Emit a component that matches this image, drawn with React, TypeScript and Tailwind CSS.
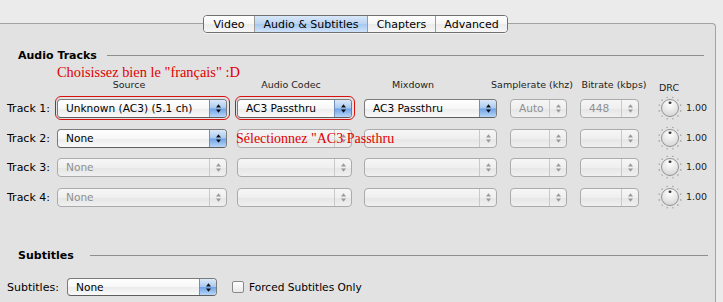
import React from "react";

type PState = "active" | "disabled";

function Arrows({ color }: { color: string }) {
  return (
    <svg width="7" height="11" viewBox="0 0 7 11">
      <path d="M3.5 1.2 L6 4.4 H1 Z" fill={color} />
      <path d="M3.5 9.8 L6 6.6 H1 Z" fill={color} />
    </svg>
  );
}

function Popup({
  w,
  text,
  state,
  textDim,
  h = "h-[19px]",
}: {
  w: string;
  text?: string;
  state: PState;
  textDim?: boolean;
  h?: string;
}) {
  const active = state === "active";
  return (
    <div
      className={`flex ${w} ${h} items-stretch overflow-hidden rounded-[4px] border ${
        active
          ? "border-[#7a7a7a] border-b-[#5e5e5e] bg-[linear-gradient(to_bottom,#ffffff_0%,#f7f7f7_50%,#ececec_52%,#f9f9f9_100%)]"
          : "border-[#ababab] bg-[linear-gradient(to_bottom,#f6f6f6_0%,#efefef_50%,#e6e6e6_52%,#f0f0f0_100%)]"
      }`}
    >
      <span
        className={`flex flex-1 items-center pl-[8px] text-[10.6px] leading-none ${
          textDim || !active ? "text-[#8f8f8f]" : "text-black"
        }`}
      >
        {text}
      </span>
      <div
        className={`flex w-[17px] items-center justify-center ${
          active
            ? "border-l border-[#6f8fb9] bg-[linear-gradient(to_bottom,#dce9f9_0%,#a9c9f0_48%,#6ea3e8_52%,#b9d6f7_100%)]"
            : "border-l border-[#c9c9c9]"
        }`}
      >
        <Arrows color={active ? "#111" : "#9a9a9a"} />
      </div>
    </div>
  );
}

function Knob() {
  const dots = Array.from({ length: 12 }, (_, i) => {
    const a = (i / 12) * Math.PI * 2 + 0.26;
    return { x: 12 + Math.cos(a) * 11.2, y: 12 + Math.sin(a) * 11.2 };
  });
  return (
    <svg width="24" height="24" viewBox="0 0 24 24">
      <defs>
        <radialGradient id="kg" cx="50%" cy="25%" r="75%">
          <stop offset="0%" stopColor="#ffffff" />
          <stop offset="100%" stopColor="#d6d6d6" />
        </radialGradient>
      </defs>
      {dots.map((d, i) => (
        <circle key={i} cx={d.x} cy={d.y} r="0.55" fill="#6a6a6a" />
      ))}
      <circle cx="12" cy="12" r="8.5" fill="url(#kg)" stroke="#8a8a8a" strokeWidth="0.9" />
      <ellipse cx="12" cy="6.8" rx="1.5" ry="1.2" fill="#3a3a3a" />
    </svg>
  );
}

function Tab({ label, w, selected, last }: { label: string; w: string; selected?: boolean; last?: boolean }) {
  return (
    <div
      className={`flex ${w} items-center justify-center text-[11px] leading-none text-black ${
        last ? "" : "border-r border-[#9c9c9c]"
      } ${
        selected
          ? "bg-[linear-gradient(to_bottom,#d9e8f8_0%,#b9d4f2_50%,#a6c8ef_52%,#cfe3fa_100%)]"
          : "bg-[linear-gradient(to_bottom,#ffffff_0%,#f6f6f6_50%,#ebebeb_52%,#f7f7f7_100%)]"
      }`}
    >
      {label}
    </div>
  );
}

function TrackRow({
  n,
  mt,
  source,
  sourceState,
  sourceDim,
  codec,
  codecState,
  mix,
  mixState,
  rate,
  bitrate,
  red,
}: {
  n: number;
  mt: string;
  source: string;
  sourceState: PState;
  sourceDim?: boolean;
  codec?: string;
  codecState: PState;
  mix?: string;
  mixState: PState;
  rate?: string;
  bitrate?: string;
  red?: boolean;
}) {
  return (
    <div className={`flex h-[20px] items-center ${mt}`}>
      <div className="w-[57px] pl-[7px] text-[11px] leading-none text-black">Track {n}:</div>
      <div className="relative">
        <Popup w="w-[170px]" text={source} state={sourceState} textDim={sourceDim} />
        {red && <div className="absolute -inset-[2.5px] rounded-[6px] border border-[#d81010]" />}
      </div>
      <div className="relative ml-[10px]">
        <Popup w="w-[115px]" text={codec} state={codecState} />
        {red && <div className="absolute -inset-[2.5px] rounded-[6px] border border-[#d81010]" />}
      </div>
      <div className="ml-[12px]">
        <Popup w="w-[133px]" text={mix} state={mixState} />
      </div>
      <div className="ml-[13px]">
        <Popup w="w-[57px]" text={rate} state="disabled" />
      </div>
      <div className="ml-[13px]">
        <Popup w="w-[59px]" text={bitrate} state="disabled" />
      </div>
      <div className="ml-[19px] flex h-[24px] w-[24px] items-center justify-center">
        <Knob />
      </div>
      <div className="ml-[4px] text-[9.5px] leading-none text-[#222]">1.00</div>
    </div>
  );
}

export default function App() {
  return (
    <div className="relative h-[302px] w-[723px] overflow-hidden bg-[#ebebeb] font-['DejaVu_Sans',sans-serif]">
      {/* tab bar */}
      <div className="relative z-10 ml-[203px] mt-[15px] flex h-[18px] w-[305px] overflow-hidden rounded-[4px] border border-[#707070] shadow-[0_1px_0_rgba(255,255,255,0.6)]">
        <Tab label="Video" w="w-[51px]" />
        <Tab label="Audio & Subtitles" w="w-[113px]" selected />
        <Tab label="Chapters" w="w-[68px]" />
        <Tab label="Advanced" w="flex-1" last />
      </div>

      {/* panel */}
      <div className="relative -mt-[10px] h-[300px] w-[716px] rounded-tr-[4px] border-r border-t border-[#a3a3a3] bg-[#e2e2e2]">
        <div className="mt-[24px] flex h-[14px] items-center">
          <div className="ml-[18px] text-[11px] font-bold leading-none text-black">Audio Tracks</div>
          <div className="ml-[10px] mr-[11px] h-px flex-1 bg-[#8e8e8e]" />
        </div>

        <div className="mt-[17px] flex h-[12px] items-center whitespace-nowrap text-[9.5px] leading-none text-[#222]">
          <div className="ml-[89px] w-[80px] text-center">Source</div>
          <div className="ml-[82px] w-[80px] text-center">Audio Codec</div>
          <div className="ml-[42px] w-[80px] text-center">Mixdown</div>
          <div className="ml-[35px] w-[88px] text-center">Samplerate (khz)</div>
          <div className="ml-[3px] w-[70px] text-center">Bitrate (kbps)</div>
          <div className="ml-[0px] mt-[5px] w-[40px] text-center">DRC</div>
        </div>

        <TrackRow
          n={1}
          mt="mt-[7px]"
          source="Unknown (AC3) (5.1 ch)"
          sourceState="active"
          codec="AC3 Passthru"
          codecState="active"
          mix="AC3 Passthru"
          mixState="active"
          rate="Auto"
          bitrate="448"
          red
        />
        <TrackRow n={2} mt="mt-[10px]" source="None" sourceState="active" codecState="disabled" mixState="disabled" />
        <TrackRow n={3} mt="mt-[9px]" source="None" sourceState="disabled" codecState="disabled" mixState="disabled" />
        <TrackRow n={4} mt="mt-[10px]" source="None" sourceState="disabled" codecState="disabled" mixState="disabled" />

        <div className="mt-[41px] flex h-[14px] items-center">
          <div className="ml-[18px] text-[11px] font-bold leading-none text-black">Subtitles</div>
          <div className="ml-[16px] mr-[7px] h-px flex-1 bg-[#8e8e8e]" />
        </div>

        <div className="mt-[15px] flex h-[20px] items-center">
          <div className="w-[67px] pl-[7px] text-[11px] leading-none text-black">Subtitles:</div>
          <Popup w="w-[150px]" text="None" state="active" h="h-[18px]" />
          <div className="ml-[15px] h-[12px] w-[12px] rounded-[2px] border border-[#8a8a8a] bg-[linear-gradient(to_bottom,#ffffff,#e9e9e9)]" />
          <div className="ml-[5px] text-[10.6px] leading-none text-black">Forced Subtitles Only</div>
        </div>

        {/* red annotations */}
        <div className="absolute left-[57px] top-[41px] whitespace-nowrap font-['Liberation_Serif',serif] text-[14.4px] leading-none text-[#e00000]">
          Choisissez bien le "français" :D
        </div>
        <div className="absolute left-[236px] top-[108px] whitespace-nowrap font-['Liberation_Serif',serif] text-[14px] leading-none text-[#e00000]">
          Sélectionnez "AC3 Passthru
        </div>
      </div>
    </div>
  );
}
